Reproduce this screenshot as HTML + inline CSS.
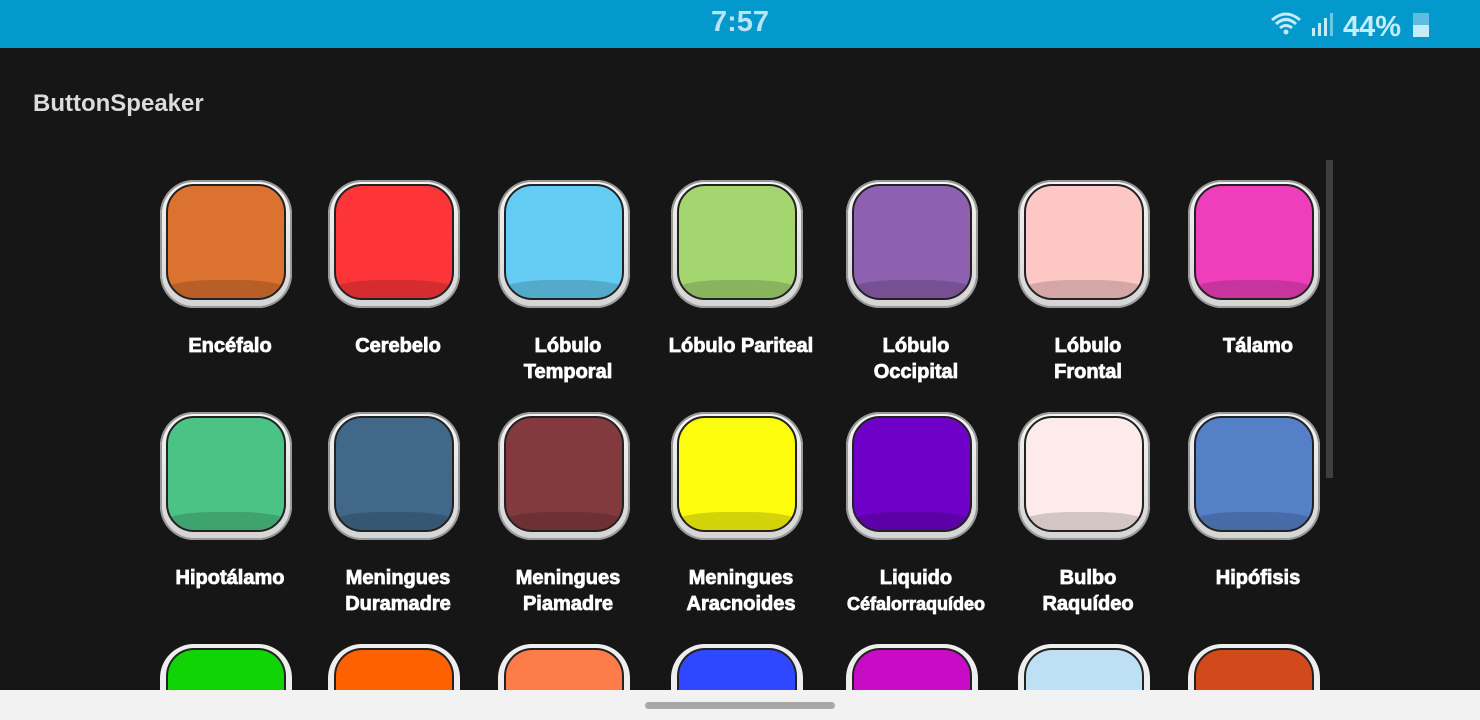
<!DOCTYPE html><html style="overflow:hidden;height:720px"><head><style>
body{margin:0;width:1480px;height:720px;background:#161616;overflow:hidden;position:relative;font-family:"Liberation Sans",sans-serif}
.sb{position:absolute;left:0;top:0;width:1480px;height:48px;background:#0399cc}
.time{position:absolute;left:0;width:1480px;top:6px;text-align:center;color:#b8e4f5;font-weight:bold;font-size:29px}
.title{position:absolute;left:33px;top:90px;color:#dcdcdc;font-weight:bold;font-size:24px}
.b{position:absolute;width:132px;height:128px;border-radius:34px;background:linear-gradient(#f6f6f6,#d4d4d4);box-shadow:inset 0 0 0 2px #999}
.i{position:absolute;left:6px;top:4px;width:116px;height:112px;border-radius:28px;border:2px solid #222;overflow:hidden}
.i::after{content:"";position:absolute;left:0;right:0;bottom:0;height:18px;background:rgba(0,0,0,.16);border-radius:40% 40% 0 0/8px 8px 0 0}
.s{height:46px;border-radius:34px 34px 0 0;box-shadow:none;background:#eee}
.s .i{height:41px;border-bottom:none;border-radius:28px 28px 0 0}
.s .i::after{display:none}
.l{position:absolute;width:180px;text-align:center;color:#fff;font-weight:bold;font-size:20px;line-height:26px;-webkit-text-stroke:0.8px #fff}
.nav{position:absolute;left:0;top:690px;width:1480px;height:30px;background:#f2f2f2}
.h{position:absolute;left:645px;top:702px;width:190px;height:7px;border-radius:4px;background:#a8a8a8}
</style></head><body>
<div class="sb"><div class="time">7:57</div>
<svg style="position:absolute;left:1270px;top:10px" width="170" height="30">
<path d="M2 10 Q16 -2 30 10 M6 14 Q16 5 26 14 M10 18 Q16 13 22 18" stroke="#c4ecfb" stroke-width="3" fill="none"/><circle cx="16" cy="22" r="2.5" fill="#c4ecfb"/>
<rect x="42" y="18" width="3" height="8" fill="#c4ecfb"/><rect x="48" y="13" width="3" height="13" fill="#c4ecfb"/><rect x="54" y="8" width="3" height="18" fill="#c4ecfb"/><rect x="60" y="3" width="3" height="23" fill="#6cc6e6"/>
<text x="73" y="26" fill="#c4ecfb" font-size="29" font-weight="bold" font-family="Liberation Sans">44%</text>
<rect x="143" y="3" width="16" height="24" fill="#5dbde0"/><rect x="143" y="15" width="16" height="12" fill="#c4ecfb"/></svg></div>
<div class="title">ButtonSpeaker</div>
<div style="position:absolute;left:1326px;top:160px;width:7px;height:318px;background:#3f3f3f"></div>
<div id="g"></div>
<div class="nav"></div><div class="h"></div>
<script>
var xs=[226,394,564,737,912,1084,1254],ys=[180,412,644];
var c=[["#dc7230","Encéfalo"],["#fe3538","Cerebelo"],["#64cbf2","Lóbulo<br>Temporal"],["#a4d66f","Lóbulo Pariteal"],["#8d60b0","Lóbulo<br>Occipital"],["#fdc7c6","Lóbulo<br>Frontal"],["#ee3ebb","Tálamo"],
["#4bc384","Hipotálamo"],["#416888","Meningues<br>Duramadre"],["#833a3e","Meningues<br>Piamadre"],["#fdfc0d","Meningues<br>Aracnoides"],["#6e00c8","Liquido<br><span style='font-size:18px'>Céfalorraquídeo</span>"],["#fcebea","Bulbo<br>Raquídeo"],["#5580c8","Hipófisis"],
["#10d406",""],["#fe6100",""],["#fe7c4a",""],["#2f47ff",""],["#c80bc6",""],["#bde0f5",""],["#d24a1c",""]];
var h="";c.forEach(function(v,k){var r=Math.floor(k/7),x=xs[k%7],y=ys[r];
h+='<div class="b'+(r==2?' s':'')+'" style="left:'+(x-66)+'px;top:'+y+'px"><div class="i" style="background:'+v[0]+'"></div></div>';
if(v[1])h+='<div class="l" style="left:'+(x-86)+'px;top:'+(y+153)+'px">'+v[1]+'</div>';});
document.getElementById("g").innerHTML=h;
</script></body></html>
